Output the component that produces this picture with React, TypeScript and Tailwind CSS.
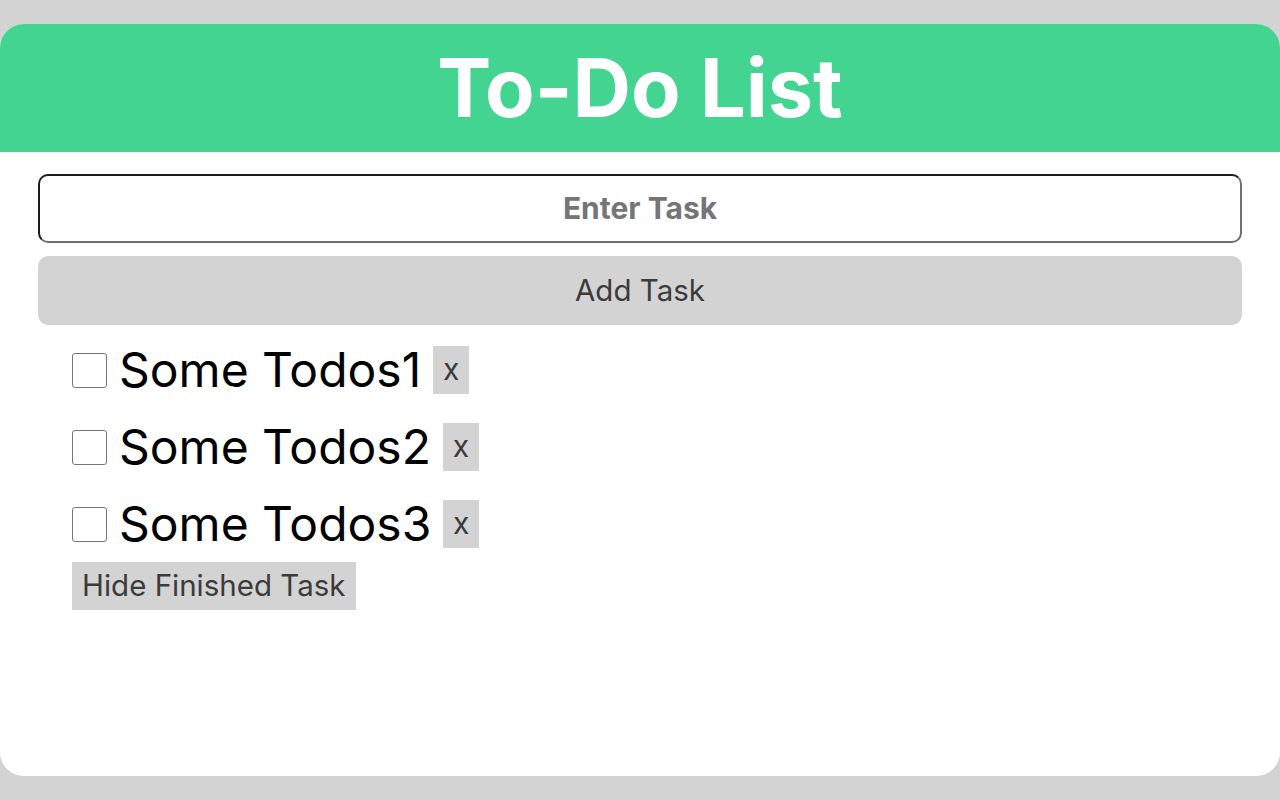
import React from "react";

const font = { fontFamily: "Inter, 'Noto Sans', sans-serif" };

function Todo({ label }: { label: string }) {
  return (
    <div className="flex items-center h-[48px]">
      <span className="w-[35px] h-[35px] border border-[#767676] rounded-[3px] bg-white shrink-0" />
      <span className="ml-[12px] text-[48px] leading-none text-black">{label}</span>
      <span className="ml-[12px] h-[48px] w-[36px] bg-[#d3d3d3] text-[#3b3b3b] text-[30px] flex items-center justify-center leading-none pb-[2px]">
        x
      </span>
    </div>
  );
}

export default function App() {
  return (
    <div className="w-[1280px] h-[800px] bg-[#d3d3d3] pt-[24px]" style={font}>
      <div className="h-[752px] bg-white rounded-[24px] overflow-hidden flex flex-col">
        <div className="h-[128px] bg-[#43d492] flex items-center justify-center">
          <h1 className="text-[81px] font-bold text-white leading-none">To-Do List</h1>
        </div>
        <div className="px-[38px] pt-[22px] flex flex-col">
          <div className="h-[69px] rounded-[10px] border-2 border-t-[#1b1b1b] border-l-[#1b1b1b] border-r-[#707070] border-b-[#707070] flex items-center justify-center">
            <span className="text-[30px] font-bold text-[#757575]">Enter Task</span>
          </div>
          <div className="mt-[13px] h-[69px] rounded-[10px] bg-[#d3d3d3] flex items-center justify-center">
            <span className="text-[29.5px] text-[#3b3b3b]">Add Task</span>
          </div>
          <div className="pl-[34px] mt-[21px] flex flex-col gap-[29px]">
            <Todo label="Some Todos1" />
            <Todo label="Some Todos2" />
            <Todo label="Some Todos3" />
          </div>
          <div className="pl-[34px] mt-[14px] flex">
            <span className="h-[48px] px-[10px] bg-[#d3d3d3] text-[#3b3b3b] text-[29.5px] flex items-center leading-none">
              Hide Finished Task
            </span>
          </div>
        </div>
      </div>
    </div>
  );
}
